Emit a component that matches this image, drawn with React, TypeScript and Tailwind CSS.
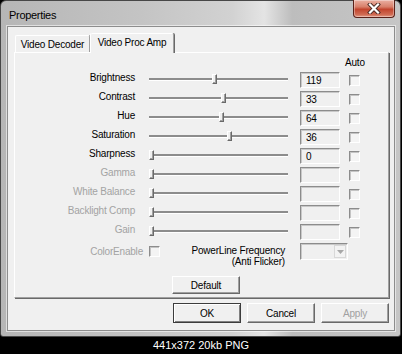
const rows = [
  { label: "Brightness", value: "119", thumb: 63, enabled: true },
  { label: "Contrast", value: "33", thumb: 72, enabled: true },
  { label: "Hue", value: "64", thumb: 70, enabled: true },
  { label: "Saturation", value: "36", thumb: 78, enabled: true },
  { label: "Sharpness", value: "0", thumb: 0, enabled: true },
  { label: "Gamma", value: "", thumb: 0, enabled: false },
  { label: "White Balance", value: "", thumb: 0, enabled: false },
  { label: "Backlight Comp", value: "", thumb: 0, enabled: false },
  { label: "Gain", value: "", thumb: 0, enabled: false },
];

export default function App() {
  return (
    <div className="w-[402px] h-[354px] bg-black flex flex-col font-['Liberation_Sans',Arial,sans-serif] text-[10px] tracking-[-0.2px] text-black overflow-hidden">
      <div className="w-[401px] h-[337px] shrink-0 flex flex-col rounded-t-[6px] rounded-b-[3px] border border-[#474747] bg-[linear-gradient(90deg,#b6b6b6_0%,#c4c4c4_35%,#d2d2d2_58%,#e4e4e4_66%,#bdbdbd_73%,#c6c6c6_100%)] pl-[6px] pr-[5px] pb-[5px]">
        <TitleBar />
        <div className="flex-1 flex flex-col border border-[#8d8d8d] bg-[#f0f0f0] pl-[6px] pt-[6px] shadow-[0_0_0_1px_rgba(255,255,255,0.55)]">
          <Tabs />
          <Panel />
          <div className="w-[375px] flex justify-end gap-[6px] mt-[5px]">
            <Button label="OK" primary />
            <Button label="Cancel" />
            <Button label="Apply" disabled />
          </div>
        </div>
      </div>
      <div className="flex-1 flex items-center justify-center text-white text-[11px] tracking-normal leading-none">
        441x372 20kb PNG
      </div>
    </div>
  );
}

function TitleBar() {
  return (
    <div className="h-[25px] shrink-0 flex justify-between items-start">
      <div className="mt-[8px] ml-[2px] text-[11px] leading-[13px] tracking-[-0.3px]">Properties</div>
      <div className="-mt-[1px] w-[42px] h-[18px] rounded-b-[4px] border border-[#5a2119] border-t-0 bg-[linear-gradient(180deg,#eab0a2_0%,#d8806b_40%,#c2452e_55%,#cf6a52_85%,#e29a86_100%)] flex items-center justify-center shadow-[inset_0_0_0_1px_rgba(255,255,255,0.35)]">
        <svg width="14" height="11" viewBox="0 0 14 11">
          <path d="M3 1.5 L11 9.5 M11 1.5 L3 9.5" stroke="#4a2a24" strokeWidth="4" strokeLinecap="square" />
          <path d="M3 1.5 L11 9.5 M11 1.5 L3 9.5" stroke="#ffffff" strokeWidth="2.2" strokeLinecap="square" />
        </svg>
      </div>
    </div>
  );
}

function Tabs() {
  return (
    <div className="h-[19px] flex items-end">
      <div className="ml-[1px] w-[75px] h-[17px] flex items-center justify-center rounded-t-[2px] border-t border-l border-r border-t-white border-l-white border-r-[#a0a0a0] shadow-[1px_0_0_#696969]">
        Video Decoder
      </div>
      <div className="relative z-10 -mb-[1px] w-[84px] h-[20px] flex items-center justify-center pb-[2px] rounded-t-[2px] bg-[#f0f0f0] border-t border-l border-r border-t-white border-l-white border-r-[#a0a0a0] shadow-[1px_0_0_#696969]">
        Video Proc Amp
      </div>
    </div>
  );
}

function Panel() {
  return (
    <div className="w-[375px] h-[246px] border border-t-white border-l-white border-r-[#a0a0a0] border-b-[#a0a0a0] shadow-[1px_1px_0_#696969] flex flex-col">
      <div className="h-[19px] flex items-center pl-[330px]">Auto</div>
      <div className="flex flex-col gap-[3px]">
        {rows.map((r) => (
          <div key={r.label} className="h-[16px] flex items-center">
            <div className={`w-[120px] self-start leading-[11px] text-right ${r.enabled ? "text-black" : "text-[#a3a3a3]"}`}>
              {r.label}
            </div>
            <Slider thumb={r.thumb} />
            <div className="ml-[12px] w-[40px] h-[16px] flex items-center pl-[5px] border border-t-[#8c8c8c] border-l-[#8c8c8c] border-r-white border-b-white shadow-[inset_1px_1px_0_#c8c8c8]">
              {r.value}
            </div>
            <Check className="ml-[9px]" />
          </div>
        ))}
      </div>
      <div className="mt-[3px] flex items-start">
        <div className="w-[128px] h-[17px] flex items-center justify-end text-[#a3a3a3]">ColorEnable</div>
        <Check className="ml-[6px] mt-[3px]" />
        <div className="w-[125px] mt-[2px] leading-[11px] text-right">
          PowerLine Frequency
          <br />
          (Anti Flicker)
        </div>
        <div className="ml-[15px] w-[48px] h-[17px] flex justify-end items-center pr-[1px] border border-t-[#8c8c8c] border-l-[#8c8c8c] border-r-white border-b-white shadow-[inset_1px_1px_0_#c8c8c8]">
          <div className="w-[12px] h-[13px] flex items-center justify-center border border-[#d8d8d8] bg-[#f3f3f3]">
            <svg width="7" height="4" viewBox="0 0 7 4">
              <path d="M0 0 H7 L3.5 4 Z" fill="#a8a8a8" />
            </svg>
          </div>
        </div>
      </div>
      <div className="ml-[157px] mt-[9px]">
        <Button label="Default" short />
      </div>
    </div>
  );
}

function Slider({ thumb }: { thumb: number }) {
  return (
    <div className="relative ml-[14px] w-[139px] h-[16px]">
      <div className="mt-[6px] h-[3px] bg-[#8c8c8c] border-b border-b-white" />
      <div
        className="absolute top-[2px] w-[5px] h-[10px] bg-[#f0f0f0] border border-t-white border-l-white border-r-[#696969] border-b-[#696969] shadow-[inset_-1px_-1px_0_#a0a0a0]"
        style={{ left: thumb }}
      />
    </div>
  );
}

function Check({ className }: { className?: string }) {
  return (
    <div
      className={`w-[11px] h-[11px] shrink-0 border border-t-[#8c8c8c] border-l-[#8c8c8c] border-r-white border-b-white bg-[#f4f4f4] shadow-[inset_1px_1px_0_#c4c4c4] ${className ?? ""}`}
    />
  );
}

function Button({
  label,
  primary,
  disabled,
  short,
}: {
  label: string;
  primary?: boolean;
  disabled?: boolean;
  short?: boolean;
}) {
  const base = `w-[68px] ${short ? "h-[18px]" : "h-[20px]"} flex items-center justify-center bg-[#f0f0f0] ${disabled ? "text-[#a0a0a0]" : "text-black"}`;
  if (primary) {
    return (
      <div className={`${base} border border-[#3c3c3c] shadow-[inset_1px_1px_0_#ffffff,inset_-1px_-1px_0_#808080]`}>
        {label}
      </div>
    );
  }
  return (
    <div className={`${base} border border-t-white border-l-white border-r-[#696969] border-b-[#696969] shadow-[inset_-1px_-1px_0_#a0a0a0]`}>
      {label}
    </div>
  );
}
